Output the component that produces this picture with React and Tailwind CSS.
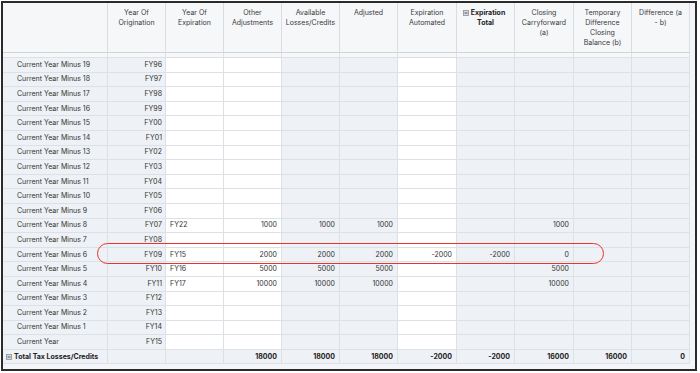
import React from 'react';

const COLS = 'grid grid-cols-[105px_58px_58px_58px_58px_58px_59px_58px_59px_58px_58px]';

const headers = [
  '',
  'Year Of Origination',
  'Year Of Expiration',
  'Other Adjustments',
  'Available Losses/Credits',
  'Adjusted',
  'Expiration Automated',
  'Expiration Total',
  'Closing Carryforward (a)',
  'Temporary Difference Closing Balance (b)',
  'Difference (a - b)',
];

const fy = ['FY96', 'FY97', 'FY98', 'FY99', 'FY00', 'FY01', 'FY02', 'FY03', 'FY04', 'FY05', 'FY06', 'FY07', 'FY08', 'FY09', 'FY10', 'FY11', 'FY12', 'FY13', 'FY14', 'FY15'];

// values by row label: [expiration, other, available, adjusted, expAuto, expTotal, closing, temp, diff]
const values = {
  'Current Year Minus 8': ['FY22', '1000', '1000', '1000', '', '', '1000', '', ''],
  'Current Year Minus 6': ['FY15', '2000', '2000', '2000', '-2000', '-2000', '0', '', ''],
  'Current Year Minus 5': ['FY16', '5000', '5000', '5000', '', '', '5000', '', ''],
  'Current Year Minus 4': ['FY17', '10000', '10000', '10000', '', '', '10000', '', ''],
};

const rows = fy.map((f, i) => {
  const n = 19 - i;
  const label = n === 0 ? 'Current Year' : `Current Year Minus ${n}`;
  return { label, fy: f, vals: values[label] || ['', '', '', '', '', '', '', '', ''] };
});

const totals = ['', '', '18000', '18000', '18000', '-2000', '-2000', '16000', '16000', '0'];

function MinusBox({ className }) {
  return (
    <svg width="6" height="6" viewBox="0 0 6 6" className={className}>
      <rect x="0.5" y="0.5" width="5" height="5" fill="#d9dde3" stroke="#8a9099" strokeWidth="0.8" />
      <line x1="1.5" y1="3" x2="4.5" y2="3" stroke="#444" strokeWidth="0.9" />
    </svg>
  );
}

function HeaderCell({ text, index }) {
  if (index === 7) {
    return (
      <div className="border-r border-[#d9dde3] bg-[#f6f7f9] pt-[5px] text-center font-bold text-[#222]">
        <div className="flex items-center justify-center gap-[2px] pr-[3px]">
          <MinusBox />
          <span>Expiration</span>
        </div>
        <div>Total</div>
      </div>
    );
  }
  if (index === 10) {
    return (
      <div className="border-r border-[#d9dde3] bg-[#f6f7f9] px-[3px] pt-[5px] text-center text-[#3a3a3a]">
        Difference (a
        <br />- b)
      </div>
    );
  }
  return (
    <div className="border-r border-[#d9dde3] bg-[#f6f7f9] px-[3px] pt-[5px] text-center text-[#3a3a3a]">
      {text}
    </div>
  );
}

function DataRow({ row }) {
  const white = (i) => (i === 0 || i === 1 || i === 4) ? 'bg-white' : 'bg-[#eef1f5]';
  return (
    <div className={`${COLS} h-[14.6px] border-b border-[#dde1e6]`}>
      <div className="flex items-center border-r border-[#dde1e6] bg-[#eef1f5] pl-[14px] text-[#333]">
        {row.label}
      </div>
      <div className="flex items-center justify-end border-r border-[#dde1e6] bg-[#eef1f5] pr-[3px] text-[#333]">
        {row.fy}
      </div>
      {row.vals.map((v, i) => (
        <div
          key={i}
          className={`flex items-center border-r border-[#dde1e6] ${white(i)} ${i === 0 ? 'justify-start pl-[4px]' : 'justify-end pr-[4px]'} text-[#333]`}
        >
          {v}
        </div>
      ))}
    </div>
  );
}

export default function App() {
  return (
    <div className="h-[373px] w-[700px] overflow-hidden bg-white font-['Inter',sans-serif] text-[7px] leading-[10px]">
      <div className="relative ml-[1px] mt-[1px] h-[370px] w-[696px] border-2 border-[#2b2b2b] bg-[#f3f5f8]">
        <div className="w-[687px]">
          <div className={`${COLS} h-[50px] border-b border-[#cfd4da]`}>
            {headers.map((h, i) => (
              <HeaderCell key={i} text={h} index={i} />
            ))}
          </div>
          <div className={`${COLS} h-[5px] border-b border-[#dde1e6]`}>
            {headers.map((h, i) => (
              <div key={i} className="border-r border-[#dde1e6] bg-[#f6f7f9]" />
            ))}
          </div>
          {rows.map((r) => (
            <DataRow key={r.label} row={r} />
          ))}
          <div className={`${COLS} h-[14.6px] border-b border-[#dde1e6] font-bold text-[#222]`}>
            <div className="flex items-center gap-[2px] border-r border-[#dde1e6] bg-[#eef1f5] pl-[3px]">
              <MinusBox />
              <span>Total Tax Losses/Credits</span>
            </div>
            {totals.map((v, i) => (
              <div key={i} className="flex items-center justify-end border-r border-[#dde1e6] bg-[#eef1f5] pr-[4px]">
                {v}
              </div>
            ))}
          </div>
        </div>
        <div className="absolute left-[94px] top-[240px] h-[21px] w-[507px] rounded-[11px] border-[1.5px] border-[#e8342c]" />
      </div>
    </div>
  );
}
